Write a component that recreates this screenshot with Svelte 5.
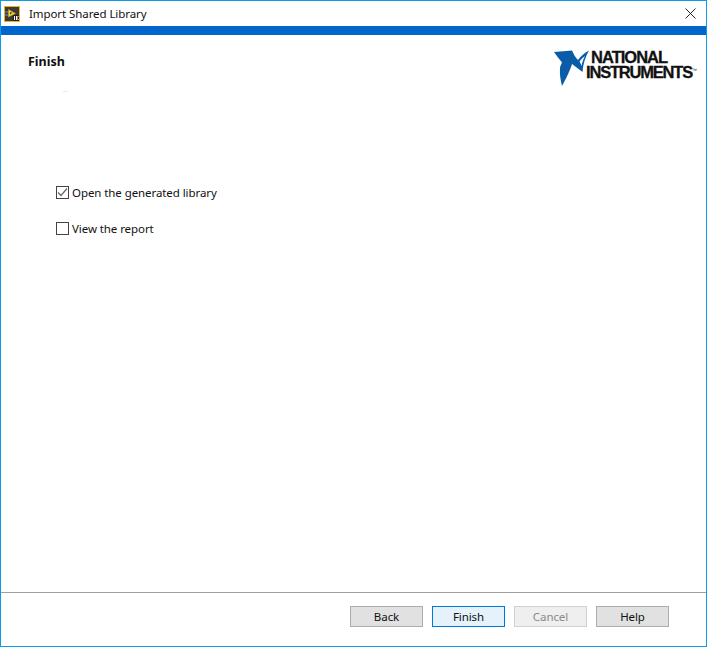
<script lang="ts">
    let openLibrary = $state(true);
    let viewReport = $state(false);

    const buttons = [
        { label: 'Back', kind: '' },
        { label: 'Finish', kind: 'is-default' },
        { label: 'Cancel', kind: 'is-disabled' },
        { label: 'Help', kind: '' },
    ];
</script>

<div class="win">
    <header class="title">
        <svg class="app-icon" width="16" height="16" viewBox="0 0 16 16" aria-hidden="true">
            <rect x="0.5" y="0.5" width="15" height="15" fill="#3a3a3a" stroke="#f2b01e" />
            <path d="M1 6h4M1 9h4" stroke="#5f9fd8" stroke-width="1" />
            <path d="M4.500 3.500L11.500 7.500L4.500 11z" fill="#f4d23a" stroke="#c99a10" stroke-width="0.5" />
            <path d="M6 6.500h2.500L6 8.500z" fill="#222" />
            <rect x="9" y="9" width="6" height="6" fill="#222" />
            <path d="M10.500 10v4M12.500 10v4M12.500 12l2-2M12.500 12l2 2" stroke="#fff" stroke-width="1" fill="none" />
        </svg>
        <span class="title-text">Import Shared Library</span>
        <svg class="close" width="11" height="11" viewBox="0 0 11 11" aria-hidden="true">
            <path d="M0.500 0.500L10.500 10.500M10.500 0.500L0.500 10.500" stroke="#222" stroke-width="1" fill="none" />
        </svg>
    </header>
    <div class="band"></div>

    <main class="body">
        <div class="head">
            <h1>Finish</h1>
            <div class="logo">
                <svg width="35" height="36" viewBox="0 0 35 36" aria-hidden="true">
                    <path d="M0 2L18 0.500C19.500 4 21.500 7.500 24 10C27 6 31 2.500 35 0.500C31.500 6.500 29 14 28.500 22C25 19.500 21.500 16.500 18 14C16.500 19 13 27 8 36C6.500 30 5.500 24 6 18C6.300 16 7 14.500 8 12.500C5 9 2.500 5.500 0 2z" fill="#0a5ca8" />
                    <path d="M25.500 11.500C27 9.500 29 7.500 31 6C29.500 9 28 12.500 27.500 16C27 14.500 26.500 13 25.500 11.500z" fill="#fff" />
                </svg>
                <div class="logo-text">
                    <span class="n">NATIONAL</span>
                    <span class="i">INSTRUMENTS<sup>™</sup></span>
                </div>
            </div>
        </div>
        <span class="speck"></span>

        <div class="options">
            <label class="opt">
                <input type="checkbox" bind:checked={openLibrary} />
                <span class="box">
                    {#if openLibrary}
                        <svg width="11" height="11" viewBox="0 0 11 11" aria-hidden="true">
                            <path d="M1 5.500L4 8.500L10 1.500" stroke="#666" stroke-width="1.200" fill="none" />
                        </svg>
                    {/if}
                </span>
                <span class="opt-text">Open the generated library</span>
            </label>
            <label class="opt">
                <input type="checkbox" bind:checked={viewReport} />
                <span class="box">
                    {#if viewReport}
                        <svg width="11" height="11" viewBox="0 0 11 11" aria-hidden="true">
                            <path d="M1 5.500L4 8.500L10 1.500" stroke="#666" stroke-width="1.200" fill="none" />
                        </svg>
                    {/if}
                </span>
                <span class="opt-text">View the report</span>
            </label>
        </div>
    </main>

    <footer class="foot">
        {#each buttons as b (b.label)}
            <button type="button" class={b.kind} disabled={b.kind === 'is-disabled'}>{b.label}</button>
        {/each}
    </footer>
</div>

<style>
    :global(body) {
        margin: 0;
        background: #fff;
    }
    .win {
        box-sizing: border-box;
        width: 707px;
        height: 647px;
        border: 1px solid #0f9be8;
        display: flex;
        flex-direction: column;
        background: #fff;
        font-family: 'Noto Sans', sans-serif;
        font-size: 11.500px;
        letter-spacing: -0.080px;
        line-height: 17px;
        color: #111;
    }
    .title {
        height: 25px;
        display: flex;
        align-items: center;
        padding: 0 10px 0 3px;
        flex: none;
    }
    .app-icon {
        margin-right: 9px;
    }
    .title-text {
        flex: 1;
        padding-bottom: 1px;
    }
    .close {
        margin-top: -1px;
    }
    .band {
        height: 9px;
        background: #0066cc;
        flex: none;
    }
    .body {
        flex: 1;
        display: flex;
        flex-direction: column;
        min-height: 0;
        position: relative;
    }
    .head {
        display: flex;
        justify-content: space-between;
        align-items: flex-start;
        padding: 15px 9px 0 27px;
    }
    h1 {
        margin: 3px 0 0;
        font-size: 12.500px;
        font-weight: 700;
        letter-spacing: 0;
        line-height: 17px;
    }
    .speck {
        position: absolute;
        left: 62px;
        top: 56px;
        width: 5px;
        height: 1px;
        background: #e8e8e8;
    }
    .logo {
        display: flex;
        align-items: flex-start;
    }
    .logo-text {
        display: flex;
        flex-direction: column;
        margin-left: -3px;
        font-family: 'Liberation Sans', sans-serif;
        font-weight: 700;
        color: #111;
        line-height: 14.500px;
        font-size: 16.500px;
        -webkit-text-stroke: 0.3px #111;
        white-space: nowrap;
    }
    .logo-text .n {
        margin-left: 5px;
        letter-spacing: -1px;
    }
    .logo-text .i {
        letter-spacing: -1.200px;
    }
    sup {
        font-size: 5px;
        line-height: 0;
        vertical-align: 6px;
        font-weight: 400;
        letter-spacing: 0;
        -webkit-text-stroke: 0;
    }
    .options {
        display: flex;
        flex-direction: column;
        gap: 18px;
        padding: 98px 0 0 55px;
    }
    .opt {
        display: flex;
        align-items: center;
        gap: 3px;
        height: 18px;
    }
    .opt input {
        display: none;
    }
    .opt-text {
        padding-bottom: 1px;
    }
    .box {
        box-sizing: border-box;
        width: 13px;
        height: 13px;
        border: 1px solid #444;
        background: #fff;
        display: flex;
        align-items: center;
        justify-content: center;
        margin-top: -1px;
    }
    .foot {
        flex: none;
        height: 54px;
        box-sizing: border-box;
        border-top: 1px solid #a0a0a0;
        display: flex;
        justify-content: flex-end;
        gap: 9px;
        padding: 13px 37px 0 0;
    }
    button {
        box-sizing: border-box;
        width: 73px;
        height: 21px;
        border: 1px solid #adadad;
        background: #e1e1e1;
        color: #111;
        font: inherit;
        letter-spacing: inherit;
        padding: 0 0 1px;
    }
    .is-default {
        background: #e5f1fb;
        border-color: #0078d7;
    }
    .is-disabled {
        background: #efefef;
        border-color: #d0d0d0;
        color: #8a8a8a;
    }
</style>
